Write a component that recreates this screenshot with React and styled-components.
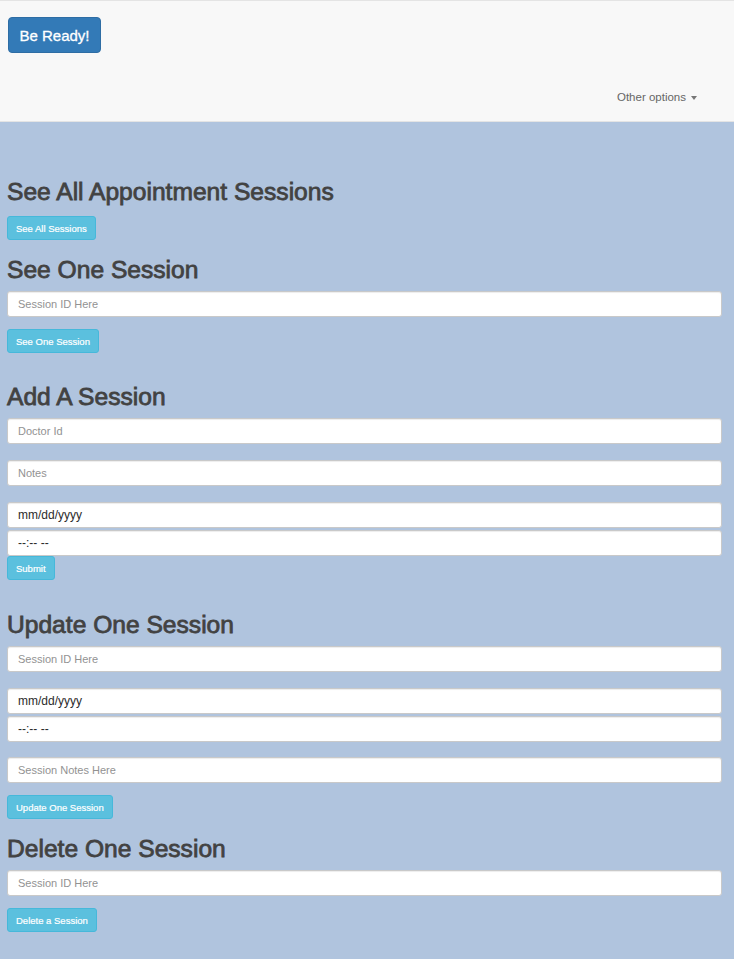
import React from "react";
import styled, { createGlobalStyle } from "styled-components";

const GlobalStyle = createGlobalStyle`
  html, body {
    margin: 0;
    padding: 0;
    background: #b0c4de;
    font-family: "Liberation Sans", Arial, Helvetica, sans-serif;
    color: #333;
  }
  * { box-sizing: border-box; }
`;

const Page = styled.div`
  min-height: 100vh;
  background: #b0c4de;
`;

const Navbar = styled.header`
  background: #f8f8f8;
  border-top: 1px solid #e4e4e4;
  border-bottom: 1px solid #e4e4e4;
  height: 122px;
  display: flex;
  flex-direction: column;
  align-items: stretch;
`;

const BrandRow = styled.div`
  display: flex;
  padding: 16px 0 0 8px;
`;

const BrandButton = styled.button`
  height: 36px;
  width: 93px;
  padding: 0;
  background: #337ab7;
  border: 1px solid #2e6da4;
  border-radius: 4px;
  color: #fff;
  font-family: "Liberation Sans", Arial, sans-serif;
  font-size: 15px;
  -webkit-text-stroke: 0.3px #fff;
  cursor: pointer;
`;

const NavRow = styled.div`
  display: flex;
  justify-content: flex-end;
  padding: 34px 37px 0 0;
`;

const DropdownToggle = styled.a`
  display: inline-flex;
  align-items: center;
  line-height: 20px;
  font-size: 11.5px;
  color: #666;
  text-decoration: none;
  cursor: pointer;
`;

const Caret = styled.span`
  display: inline-block;
  width: 0;
  height: 0;
  margin-left: 5px;
  margin-top: 1px;
  border-top: 4px solid #777;
  border-left: 3px solid transparent;
  border-right: 3px solid transparent;
`;

const Main = styled.main`
  padding: 0 12px 0 7px;
  display: flex;
  flex-direction: column;
`;

const Section = styled.section`
  margin-top: ${(p) => p.$top}px;
  display: flex;
  flex-direction: column;
  align-items: flex-start;
`;

const Heading = styled.h2`
  margin: 0 0 ${(p) => (p.$after != null ? p.$after : 8)}px;
  font-size: 24.6px;
  line-height: 27px;
  font-weight: 400;
  color: #424242;
  -webkit-text-stroke: 0.8px #424242;
`;

const Input = styled.input`
  width: 100%;
  height: 26px;
  margin: 0 0 ${(p) => p.$after || 0}px;
  padding: 0 10px;
  background: #fff;
  border: 1px solid #c9c9c9;
  border-radius: 3px;
  box-shadow: inset 0 1px 1px rgba(0, 0, 0, 0.075);
  font-family: "Liberation Sans", Arial, sans-serif;
  font-size: ${(p) => (p.$filled ? 12 : 11)}px;
  color: #333;
  outline: none;
  &::placeholder {
    color: ${(p) => (p.$filled ? "#2b2b2b" : "#929292")};
    opacity: 1;
  }
`;

const InfoButton = styled.button`
  height: 24px;
  padding: 0 8px;
  background: #5bc0de;
  border: 1px solid #46b8da;
  border-radius: 3px;
  color: #fff;
  font-family: "Liberation Sans", Arial, sans-serif;
  font-size: 9.5px;
  -webkit-text-stroke: 0.2px #fff;
  cursor: pointer;
`;

export default function App() {
  return (
    <Page>
      <GlobalStyle />
      <Navbar>
        <BrandRow>
          <BrandButton>Be Ready!</BrandButton>
        </BrandRow>
        <NavRow>
          <DropdownToggle>
            Other options
            <Caret />
          </DropdownToggle>
        </NavRow>
      </Navbar>

      <Main>
        <Section $top={56}>
          <Heading $after={11}>See All Appointment Sessions</Heading>
          <InfoButton>See All Sessions</InfoButton>
        </Section>

        <Section $top={16}>
          <Heading>See One Session</Heading>
          <Input placeholder="Session ID Here" $after={12} />
          <InfoButton>See One Session</InfoButton>
        </Section>

        <Section $top={30}>
          <Heading>Add A Session</Heading>
          <Input placeholder="Doctor Id" $after={16} />
          <Input placeholder="Notes" $after={16} />
          <Input placeholder="mm/dd/yyyy" $filled $after={2} />
          <Input placeholder="--:-- --" $filled />
          <InfoButton>Submit</InfoButton>
        </Section>

        <Section $top={31}>
          <Heading>Update One Session</Heading>
          <Input placeholder="Session ID Here" $after={16} />
          <Input placeholder="mm/dd/yyyy" $filled $after={2} />
          <Input placeholder="--:-- --" $filled $after={15} />
          <Input placeholder="Session Notes Here" $after={12} />
          <InfoButton>Update One Session</InfoButton>
        </Section>

        <Section $top={16}>
          <Heading>Delete One Session</Heading>
          <Input placeholder="Session ID Here" $after={12} />
          <InfoButton>Delete a Session</InfoButton>
        </Section>
      </Main>
    </Page>
  );
}
